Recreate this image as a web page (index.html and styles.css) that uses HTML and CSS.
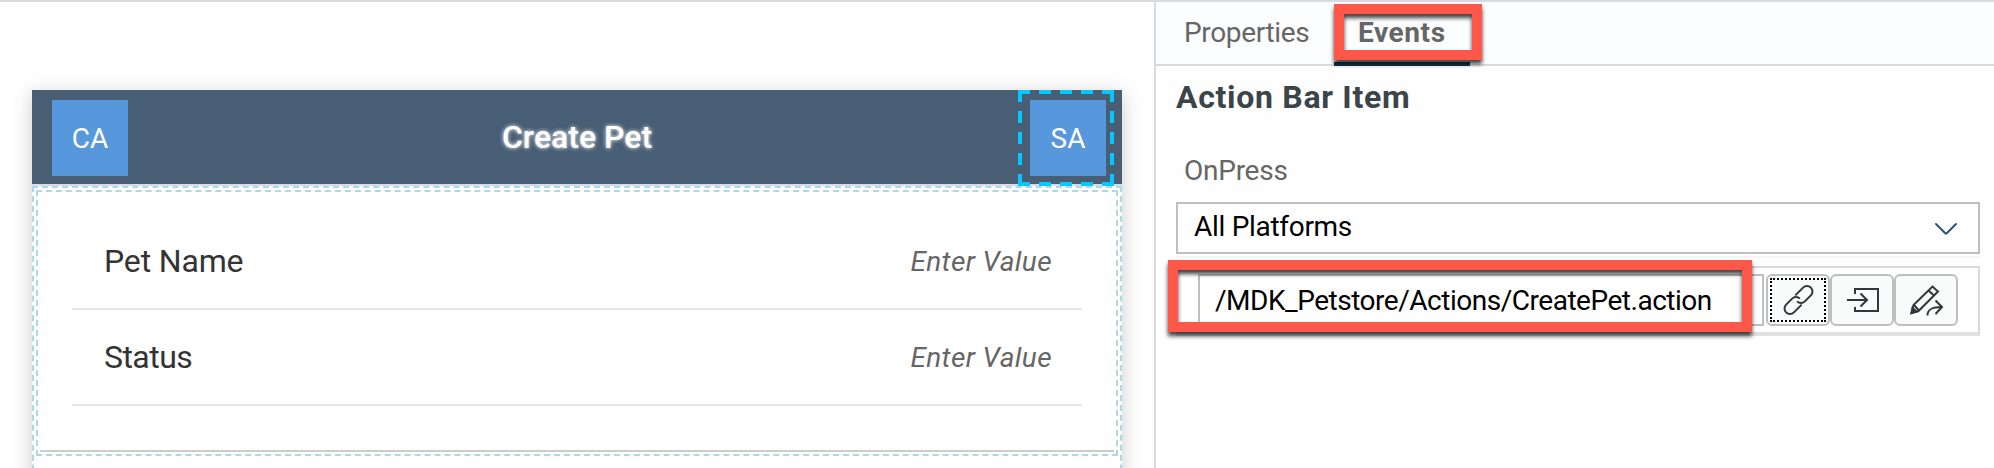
FILE: index.html
```html
<!DOCTYPE html>
<html lang="en">
<head>
<meta charset="utf-8">
<title>Page editor</title>
<link rel="stylesheet" href="styles.css">
</head>
<body>
<div class="editor">
  <main class="canvas">
    <section class="page">
      <header class="action-bar">
        <div class="bar-item">CA</div>
        <h1 class="page-title">Create Pet</h1>
        <div class="bar-item selected">SA
          <svg class="selection" viewBox="0 0 96 96" fill="none" stroke="#06c7ff" stroke-width="4" stroke-dasharray="12 9">
            <path d="M0 2H96"/><path d="M0 94H96"/><path d="M2 0V96"/><path d="M94 0V96"/>
          </svg>
        </div>
      </header>
      <div class="page-body">
        <div class="section">
          <div class="rows">
            <div class="row"><span class="label">Pet Name</span><span class="value">Enter Value</span></div>
            <div class="row"><span class="label tight">Status</span><span class="value">Enter Value</span></div>
          </div>
          <div class="section-end"></div>
        </div>
      </div>
    </section>
  </main>
  <aside class="panel">
    <nav class="tabs">
      <div class="tab">Properties</div>
      <div class="tab active">Events<div class="callout"></div></div>
    </nav>
    <h2 class="heading">Action Bar Item</h2>
    <div class="event-name">OnPress</div>
    <div class="select"><span>All Platforms</span>
      <svg class="chevron" viewBox="0 0 24 14" fill="none" stroke="#2f5375" stroke-width="2" stroke-linecap="round" stroke-linejoin="round"><path d="M2 2L11 11Q12 12 13 11L22 2"/></svg>
    </div>
    <div class="divider"></div>
    <div class="binding">
      <div class="input">/MDK_Petstore/Actions/CreatePet.action</div>
      <button class="tool focused">
        <svg viewBox="0 0 64 52"><g transform="translate(32.500 26) rotate(-45)"><path d="M1 -5.500H12A5.500 5.500 0 0 1 12 5.500H3.500A5.500 5.500 0 0 1 -2 0"/><path d="M-1 5.500H-12A5.500 5.500 0 0 1 -12 -5.500H-3.500A5.500 5.500 0 0 1 2 0"/></g></svg>
      </button>
      <button class="tool">
        <svg viewBox="0 0 64 52"><path d="M25 20V15H48V37H25V33M17 26H37M30.500 19.500L37 26L30.500 32.500"/></svg>
      </button>
      <button class="tool">
        <svg viewBox="0 0 64 52"><path d="M17.500 39L19.500 31L38.500 12.500L44 17.500L24.500 37ZM34.500 16.500L40 21.500M20 31L24.500 36"/><path fill="#32363a" d="M17.500 39L18.500 34L22.500 37.500Z"/><path d="M33.500 41.500C33.500 35.500 37.500 33 48 33M41.500 26.500L48 33L41.500 40"/></svg>
      </button>
      <div class="callout callout-path"></div>
    </div>
  </aside>
</div>
</body>
</html>
```

FILE: styles.css
```css
* { box-sizing: border-box; }

body {
  margin: 0;
  background: #fefefe;
  font-family: Roboto, "Liberation Sans", sans-serif;
  font-size: 28px;
  color: #333;
}

.editor {
  display: grid;
  grid-template-columns: 1154px 840px;
  height: 468px;
  overflow: hidden;
  border-top: 2px solid #d9d9de;
}

.canvas { padding: 88px 32px 0; overflow: hidden; }

.page {
  width: 1090px;
  height: 500px;
  background: #fff;
  box-shadow: 0 4px 18px rgba(0, 0, 0, 0.2);
}

.action-bar {
  display: flex;
  align-items: flex-start;
  height: 96px;
  padding: 10px 16px 0 20px;
  background: #475e75;
  border-bottom: 2px solid #d3deea;
}

.bar-item {
  position: relative;
  width: 76px;
  height: 76px;
  background: #5797db;
  color: #fff;
  line-height: 78px;
  text-align: center;
}

.selection {
  position: absolute;
  left: -12px;
  top: -10px;
  width: 96px;
  height: 96px;
}

.page-title {
  flex: 1;
  margin: 0 0 0 -4px;
  font-size: 32px;
  font-weight: 500;
  line-height: 74px;
  text-align: center;
  color: #fff;
  text-shadow: 0 0 4px #fff;
}

.page-body {
  height: 404px;
  padding: 2px;
  border: 2px dashed #add8e6;
}

.section {
  height: 266px;
  border: 2px dashed #add8e6;
  padding: 22px 2px 0;
}

.rows { padding: 0 32px; }

.row {
  display: flex;
  justify-content: space-between;
  height: 96px;
  padding: 0 30px 0 32px;
  border-bottom: 2px solid #e5e5e5;
  line-height: 94px;
}

.label { font-size: 32px; letter-spacing: -0.15px; }
.label.tight { letter-spacing: -0.55px; }
.value {
  padding-top: 1px;
  font-style: italic;
  letter-spacing: 0.4px;
  color: #666;
}
.section-end { height: 46px; border-bottom: 2px solid #ccc; }

.panel { border-left: 2px solid #d9d9de; }

.tabs {
  display: flex;
  height: 64px;
  padding-left: 26px;
  background: #fcfdff;
  border-bottom: 2px solid #d9d9de;
  color: #666;
  line-height: 62px;
}

.tab { position: relative; height: 64px; white-space: nowrap; }
.tab:first-child {
  width: 152px;
  padding-left: 2px;
  letter-spacing: -0.35px;
}
.tab.active {
  width: 136px;
  padding-left: 24px;
  border-bottom: 4px solid #16354f;
  font-weight: 700;
  letter-spacing: 0.6px;
}

.callout {
  position: absolute;
  left: 0;
  top: 2px;
  width: 148px;
  height: 56px;
  border: 10px solid #ff584a;
  filter: drop-shadow(0 4px 2px rgba(0, 0, 0, 0.75));
}

.heading {
  margin: 0;
  padding-left: 20px;
  height: 62px;
  font-size: 32px;
  letter-spacing: 0.7px;
  line-height: 62px;
  color: #3a4449;
}

.event-name {
  height: 74px;
  padding-left: 28px;
  letter-spacing: -0.25px;
  line-height: 86px;
  color: #666;
}

.select {
  display: flex;
  align-items: center;
  justify-content: space-between;
  width: 804px;
  height: 52px;
  margin-left: 20px;
  padding: 0 20px 0 16px;
  border: 2px solid #bfbfbf;
  background: #fff;
  color: #000;
  letter-spacing: -0.3px;
}

.select span { margin-top: -3px; }
.chevron { width: 24px; height: 14px; margin-top: 2px; }
.divider { width: 804px; height: 2px; margin: 2px 0 8px 20px; background: #f5f5f5; }

.binding {
  position: relative;
  display: flex;
  width: 804px;
  height: 70px;
  margin-left: 20px;
  padding: 6px 0 0 20px;
  border: 2px solid #d9d9d9;
  border-bottom: 4px solid #e0e0e0;
  background: #fff;
}

.input {
  width: 566px;
  height: 52px;
  margin-right: 2px;
  padding-left: 15px;
  border: 2px solid #bfbfbf;
  line-height: 49px;
  color: #000;
  letter-spacing: -0.48px;
  white-space: nowrap;
}

.tool {
  position: relative;
  width: 64px;
  height: 52px;
  padding: 0;
  border: 2px solid #bfbfbf;
  border-radius: 6px;
  background: #f9fafa;
}

.tool svg {
  display: block;
  width: 64px;
  height: 52px;
  margin: -2px;
  fill: none;
  stroke: #32363a;
  stroke-width: 2;
}

.focused::after {
  content: "";
  position: absolute;
  inset: 2px;
  border: 2px dotted #000;
}

.callout-path { left: -10px; top: -8px; width: 584px; height: 72px; }
```
